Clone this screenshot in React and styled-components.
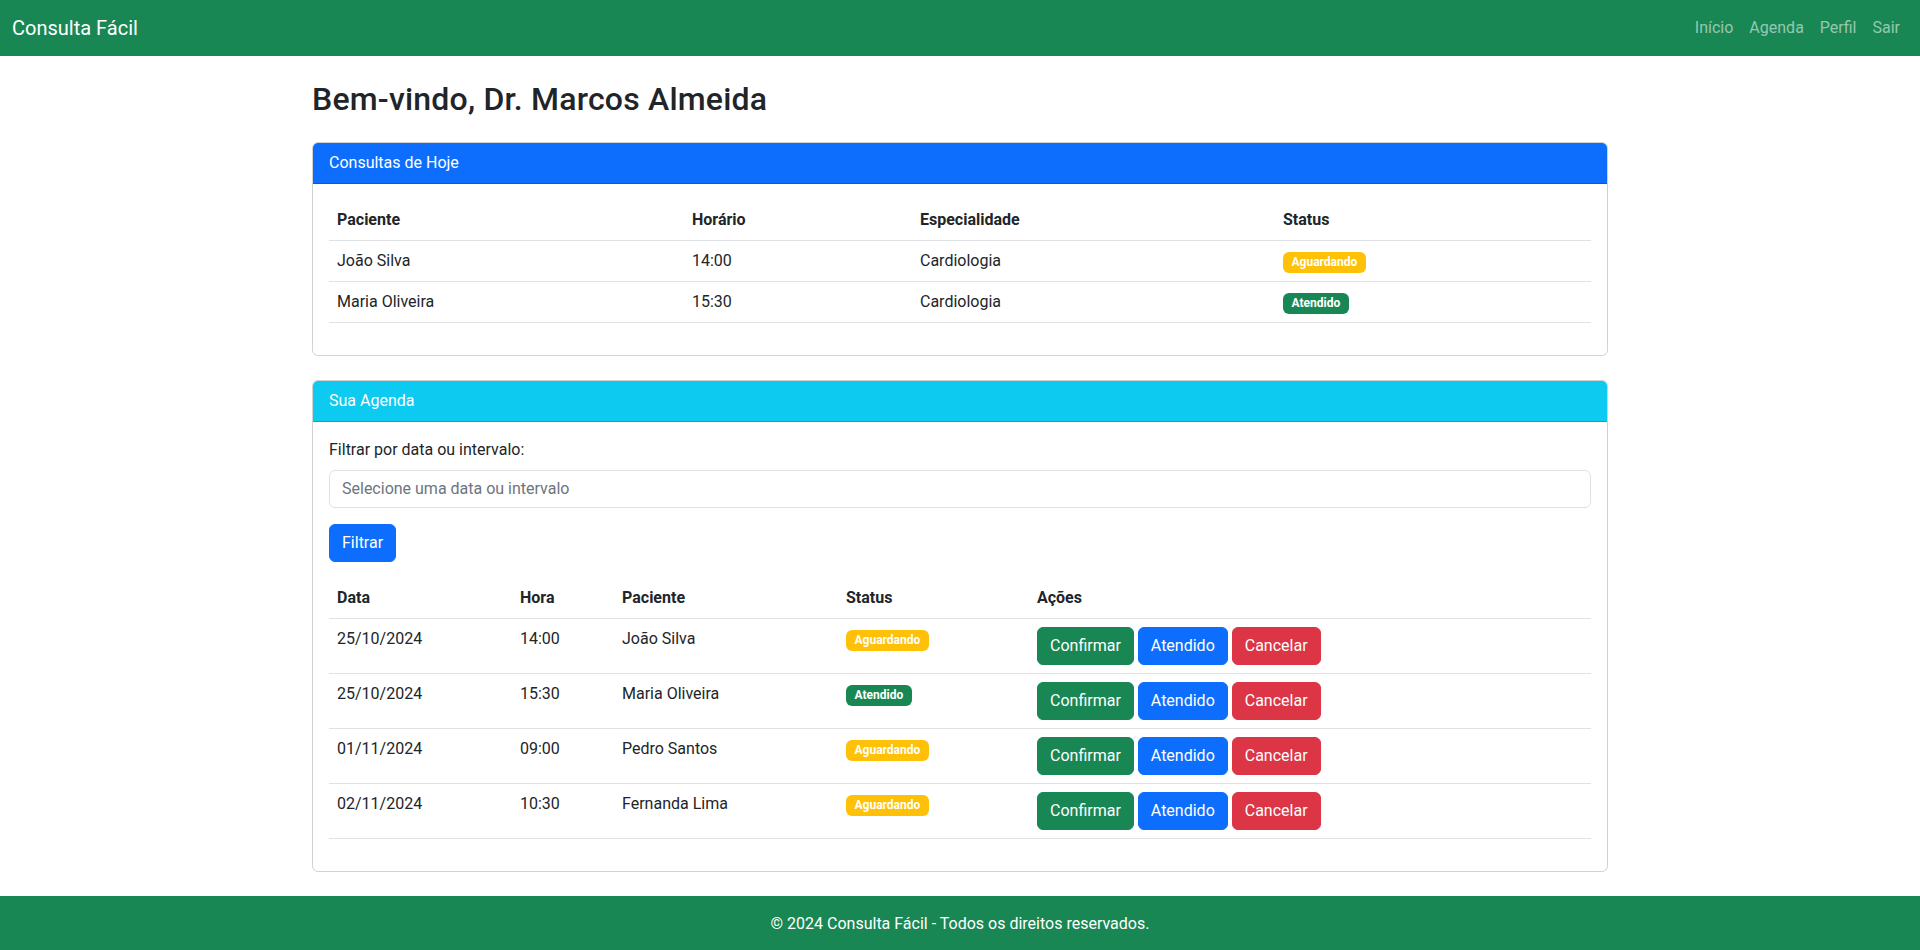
import React from "react";
import styled, { createGlobalStyle } from "styled-components";

// global
const GlobalStyle = createGlobalStyle`
    * {
        box-sizing: border-box;
    }
    body {
        margin: 0;
        font-family: Roboto, "Noto Sans", "Liberation Sans", Arial, sans-serif;
        font-size: 16px;
        line-height: 1.5;
        color: #212529;
        background: #fff;
    }
`;

const colors = {
    success: "#198754",
    primary: "#0d6efd",
    info: "#0dcaf0",
    danger: "#dc3545",
    warning: "#ffc107",
};

// navbar
const Navbar = styled.nav`
    display: flex;
    align-items: center;
    justify-content: space-between;
    padding: 8px 12px;
    background-color: ${colors.success};
`;

const Brand = styled.a`
    padding: 5px 0;
    font-size: 20px;
    line-height: 30px;
    color: #fff;
    text-decoration: none;
`;

const NavList = styled.ul`
    display: flex;
    list-style: none;
    margin: 0;
    padding: 0;
`;

const NavLink = styled.a`
    display: block;
    padding: 8px;
    color: rgba(255, 255, 255, 0.55);
    text-decoration: none;
`;

// page
const Container = styled.main`
    max-width: 1320px;
    margin: 0 auto;
    padding: 0 12px;
`;

const Title = styled.h2`
    margin: 24px 0;
    font-size: 32px;
    font-weight: 500;
    line-height: 1.2;
    letter-spacing: 0.2px;
`;

const Card = styled.section`
    margin-bottom: 24px;
    border: 1px solid rgba(0, 0, 0, 0.175);
    border-radius: 6px;
    overflow: hidden;
`;

const CardHeader = styled.div`
    padding: 8px 16px;
    color: #fff;
    background-color: ${(props) => props.$bg};
    border-bottom: 1px solid rgba(0, 0, 0, 0.175);
`;

const CardBody = styled.div`
    padding: 16px;
`;

const Label = styled.label`
    display: block;
    margin-bottom: 8px;
`;

const Input = styled.input`
    display: block;
    width: 100%;
    margin-bottom: 16px;
    padding: 6px 12px;
    font: inherit;
    line-height: 24px;
    color: #212529;
    border: 1px solid #dee2e6;
    border-radius: 6px;

    &::placeholder {
        color: #6c757d;
    }
`;

const Button = styled.button`
    display: inline-block;
    padding: 6px 12px;
    font: inherit;
    line-height: 24px;
    color: #fff;
    background-color: ${(props) => props.$bg};
    border: 1px solid ${(props) => props.$bg};
    border-radius: 6px;
    cursor: pointer;
`;

const FilterButton = styled(Button)`
    margin-bottom: 16px;
`;

const Table = styled.table`
    width: 100%;
    margin-bottom: 16px;
    border-collapse: collapse;

    th,
    td {
        padding: 8px;
        text-align: left;
        vertical-align: top;
        border-bottom: 1px solid #dee2e6;
    }

    th {
        font-weight: 700;
        vertical-align: bottom;
    }
`;

const Badge = styled.span`
    display: inline-block;
    padding: 4.2px 8.5px;
    font-size: 12px;
    font-weight: 700;
    line-height: 1;
    color: #fff;
    background-color: ${(props) => props.$bg};
    border-radius: 6px;
`;

const Actions = styled.div`
    display: flex;
    gap: 4px;
`;

const Footer = styled.footer`
    margin-top: 24px;
    padding: 16px;
    text-align: center;
    color: #fff;
    background-color: ${colors.success};
`;

const statusColor = (status) =>
    status === "Atendido" ? colors.success : colors.warning;

const hoje = [
    { paciente: "João Silva", horario: "14:00", especialidade: "Cardiologia", status: "Aguardando" },
    { paciente: "Maria Oliveira", horario: "15:30", especialidade: "Cardiologia", status: "Atendido" },
];

const agenda = [
    { data: "25/10/2024", hora: "14:00", paciente: "João Silva", status: "Aguardando" },
    { data: "25/10/2024", hora: "15:30", paciente: "Maria Oliveira", status: "Atendido" },
    { data: "01/11/2024", hora: "09:00", paciente: "Pedro Santos", status: "Aguardando" },
    { data: "02/11/2024", hora: "10:30", paciente: "Fernanda Lima", status: "Aguardando" },
];

const App = () => {
    return (
        <>
            <GlobalStyle />
            <Navbar>
                <Brand href="#">Consulta Fácil</Brand>
                <NavList>
                    {["Início", "Agenda", "Perfil", "Sair"].map((item) => (
                        <li key={item}>
                            <NavLink href="#">{item}</NavLink>
                        </li>
                    ))}
                </NavList>
            </Navbar>

            <Container>
                <Title>Bem-vindo, Dr. Marcos Almeida</Title>

                <Card>
                    <CardHeader $bg={colors.primary}>Consultas de Hoje</CardHeader>
                    <CardBody>
                        <Table>
                            <thead>
                                <tr>
                                    <th style={{ width: 355 }}>Paciente</th>
                                    <th style={{ width: 228 }}>Horário</th>
                                    <th style={{ width: 363 }}>Especialidade</th>
                                    <th>Status</th>
                                </tr>
                            </thead>
                            <tbody>
                                {hoje.map((c) => (
                                    <tr key={c.paciente}>
                                        <td>{c.paciente}</td>
                                        <td>{c.horario}</td>
                                        <td>{c.especialidade}</td>
                                        <td>
                                            <Badge $bg={statusColor(c.status)}>{c.status}</Badge>
                                        </td>
                                    </tr>
                                ))}
                            </tbody>
                        </Table>
                    </CardBody>
                </Card>

                <Card>
                    <CardHeader $bg={colors.info}>Sua Agenda</CardHeader>
                    <CardBody>
                        <Label htmlFor="filtro">Filtrar por data ou intervalo:</Label>
                        <Input id="filtro" placeholder="Selecione uma data ou intervalo" />
                        <FilterButton $bg={colors.primary}>Filtrar</FilterButton>

                        <Table>
                            <thead>
                                <tr>
                                    <th style={{ width: 183 }}>Data</th>
                                    <th style={{ width: 102 }}>Hora</th>
                                    <th style={{ width: 224 }}>Paciente</th>
                                    <th style={{ width: 191 }}>Status</th>
                                    <th>Ações</th>
                                </tr>
                            </thead>
                            <tbody>
                                {agenda.map((c) => (
                                    <tr key={c.data + c.hora}>
                                        <td>{c.data}</td>
                                        <td>{c.hora}</td>
                                        <td>{c.paciente}</td>
                                        <td>
                                            <Badge $bg={statusColor(c.status)}>{c.status}</Badge>
                                        </td>
                                        <td>
                                            <Actions>
                                                <Button $bg={colors.success}>Confirmar</Button>
                                                <Button $bg={colors.primary}>Atendido</Button>
                                                <Button $bg={colors.danger}>Cancelar</Button>
                                            </Actions>
                                        </td>
                                    </tr>
                                ))}
                            </tbody>
                        </Table>
                    </CardBody>
                </Card>
            </Container>

            <Footer>© 2024 Consulta Fácil - Todos os direitos reservados.</Footer>
        </>
    );
};

export default App;
